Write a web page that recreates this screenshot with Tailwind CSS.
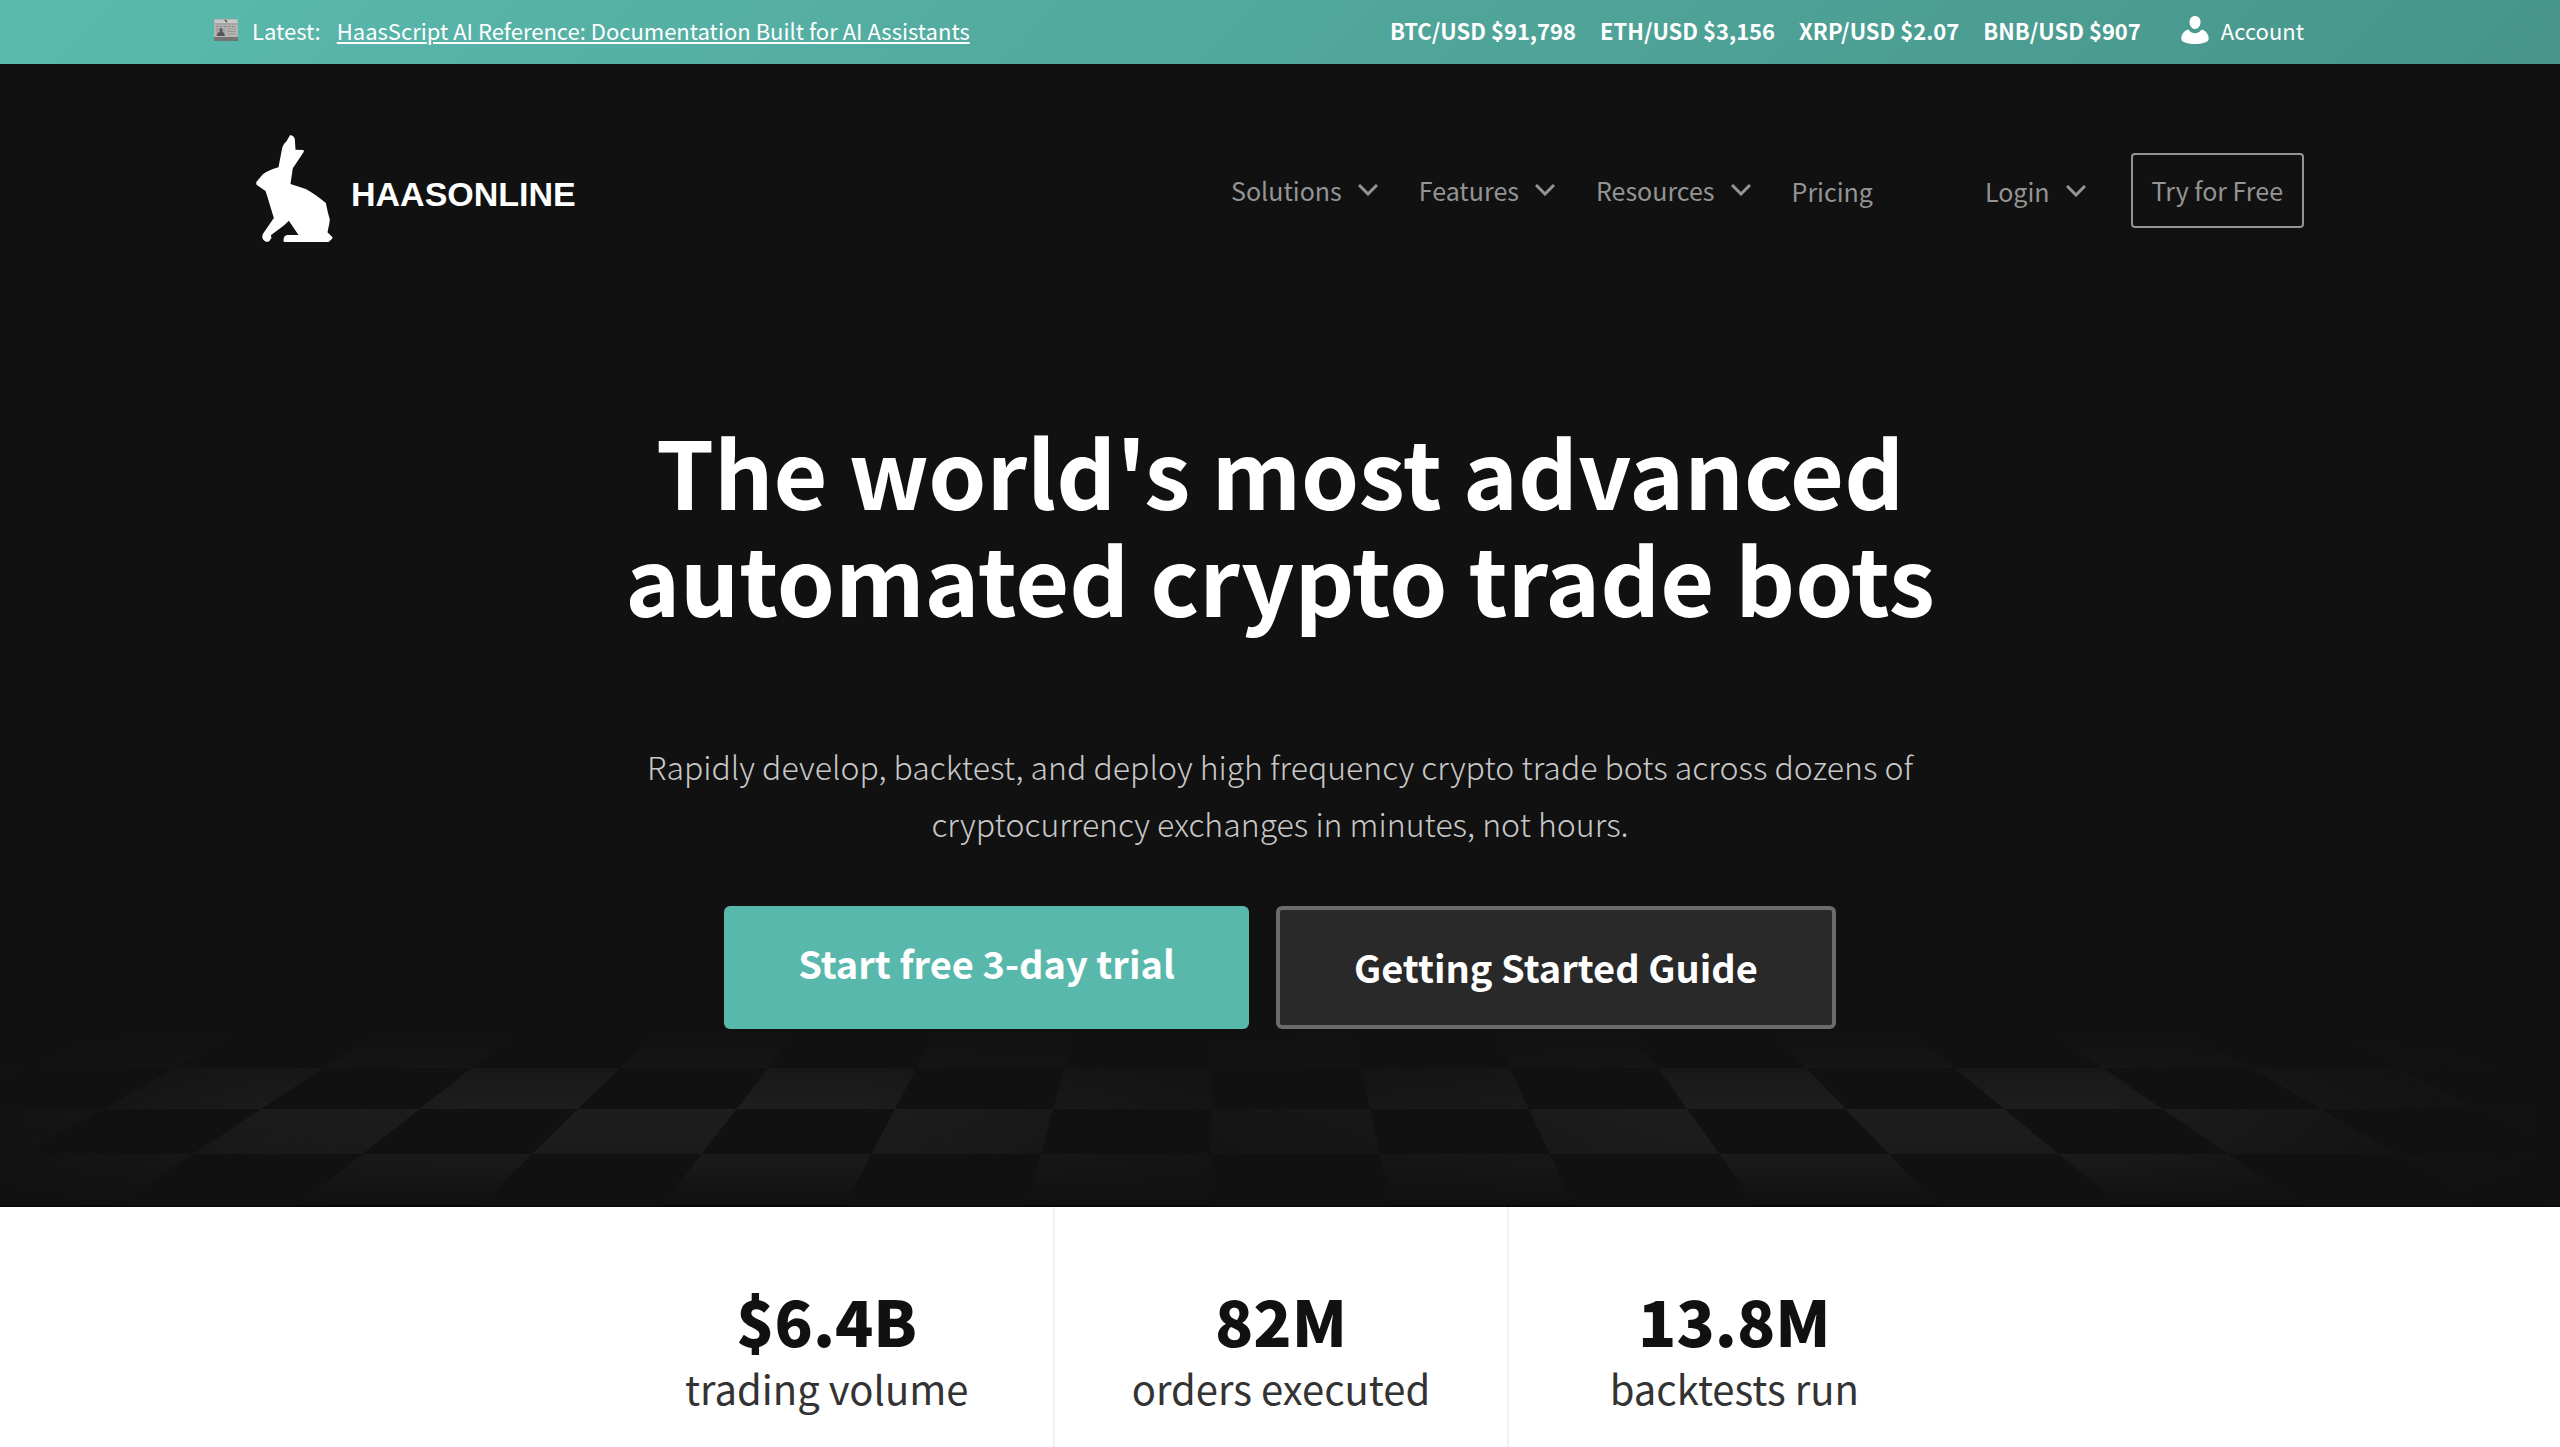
<!DOCTYPE html>
<html lang="en">
<head>
<meta charset="utf-8">
<meta name="viewport" content="width=device-width, initial-scale=1">
<title>HaasOnline</title>
<script src="https://cdn.jsdelivr.net/npm/@tailwindcss/browser@4"></script>
</head>
<body class="bg-white font-['Noto_Sans_CJK_SC','Open_Sans',sans-serif] text-[#111111]">

<div class="flex h-16 items-center justify-between bg-linear-135 from-[#5bbaae] to-[#47958a] pr-[10%] pb-1 pl-[214px] text-[22px] leading-8 whitespace-nowrap text-white">
  <div class="flex items-center">
    <svg class="mr-3.5 h-[22px] w-6" viewBox="0 0 24 22" aria-hidden="true">
      <rect x="0" y="0" width="24" height="22" rx="1" fill="#b4b4b2"/>
      <rect x="1" y="1" width="22" height="3" fill="#c9c9c7"/>
      <path d="M1 5h22M2 7.500h20" stroke="#8b8b89" stroke-dasharray="3 1"/>
      <path d="M11 1l2 2" stroke="#444" stroke-width="1.500"/>
      <rect x="2" y="9" width="9" height="8" fill="#a3a3a1"/>
      <path d="M3 17c0-3 1-4 3-4-1-2 0-4 1-4s2 2 1 4c2 0 2 2 3 4z" fill="#555"/>
      <path d="M13 10h9M13 12.500h9M13 15h9" stroke="#999997"/>
      <rect x="0" y="18" width="24" height="4" fill="#747472"/>
    </svg>
    <span class="mr-4">Latest:</span>
    <a href="#" class="underline decoration-2 underline-offset-2">HaasScript AI Reference: Documentation Built for AI Assistants</a>
  </div>
  <div class="flex items-center">
    <ul class="flex gap-6 font-bold">
      <li>BTC/USD $91,798</li>
      <li>ETH/USD $3,156</li>
      <li>XRP/USD $2.07</li>
      <li>BNB/USD $907</li>
    </ul>
    <a href="#" class="ml-10 flex items-center gap-3">
      <svg class="h-7 w-7" viewBox="0 0 28 28" fill="#fff" aria-hidden="true">
        <path d="M14 0c3.300 0 5.500 2.600 5.500 6s-2.200 7-5.500 7-5.500-3.600-5.500-7S10.700 0 14 0z"/>
        <path d="M7.500 13.500C9 16 11.300 17.300 14 17.300s5-1.300 6.500-3.800c4.500 1.200 7.200 4.700 7.200 9.500 0 3.500-7 5-13.700 5S.3 26.500.3 23c0-4.800 2.700-8.300 7.200-9.500z"/>
      </svg>
      Account
    </a>
  </div>
</div>

<div class="relative border-b-2 border-[#0a0a0a] bg-[#111111]">
  <svg id="floor" class="absolute -bottom-0.5 left-0 h-[180px] w-full" viewBox="0 1027 2560 180" preserveAspectRatio="none" aria-hidden="true">
    <defs>
      <linearGradient id="depth" x1="0" y1="0" x2="0" y2="1">
        <stop offset="0" stop-color="#fff" stop-opacity="0"/>
        <stop offset=".22" stop-color="#fff" stop-opacity=".35"/>
        <stop offset=".24" stop-color="#fff" stop-opacity=".6"/>
        <stop offset=".46" stop-color="#fff" stop-opacity="1"/>
        <stop offset=".7" stop-color="#fff" stop-opacity=".8"/>
        <stop offset=".95" stop-color="#fff" stop-opacity=".1"/>
        <stop offset="1" stop-color="#fff" stop-opacity="0"/>
      </linearGradient>
      <linearGradient id="spread" x1="0" y1="0" x2="1" y2="0">
        <stop offset="0" stop-color="#1e1e1e" stop-opacity=".1"/>
        <stop offset=".1" stop-color="#1e1e1e" stop-opacity=".8"/>
        <stop offset=".2" stop-color="#1e1e1e"/>
        <stop offset=".33" stop-color="#1e1e1e"/>
        <stop offset=".47" stop-color="#1e1e1e" stop-opacity=".35"/>
        <stop offset=".57" stop-color="#1e1e1e" stop-opacity=".6"/>
        <stop offset=".65" stop-color="#1e1e1e"/>
        <stop offset=".82" stop-color="#1e1e1e"/>
        <stop offset=".93" stop-color="#1e1e1e" stop-opacity=".3"/>
        <stop offset="1" stop-color="#1e1e1e" stop-opacity="0"/>
      </linearGradient>
      <mask id="tiles" maskUnits="userSpaceOnUse" x="0" y="1027" width="2560" height="180"><path id="tilePath" fill="#fff"/></mask>
      <mask id="fade" maskUnits="userSpaceOnUse" x="0" y="1027" width="2560" height="180"><rect x="0" y="1027" width="2560" height="180" fill="url(#depth)"/></mask>
    </defs>
    <g mask="url(#fade)"><rect x="0" y="1027" width="2560" height="180" fill="url(#spread)" mask="url(#tiles)"/></g>
  </svg>

  <header class="relative flex items-center justify-between px-[10%] pt-[71px] text-[25px] leading-8 whitespace-nowrap text-[#949494]">
    <a href="#" class="flex items-center text-white">
      <svg class="h-[107px] w-[77px]" viewBox="78 75 230 321" fill="#fff" aria-hidden="true">
        <path d="M180 75c7 1 12 6 14 12l2 32 24 1 1 5-33 50-7 47 46 15c20 12 40 25 60 42l6 28 6 22-2 14-5 24 15 15-1 4-12 11H163l-3-4c0-12 4-17 12-18l33 0-29-43-14 14-40 30 2 8-4 5c-2 5-6 7-12 6-6-2-11-7-12-15l2-8 33-48-20-66-5-15-27-19-1-7 20-24c11-9 26-15 47-21l11-58c3-9 7-16 12-19z"/>
      </svg>
      <span class="pt-2.5 pl-[18px] font-['Liberation_Sans',Arial,sans-serif] text-[34px] leading-10 font-bold">HAASONLINE</span>
    </a>
    <div class="flex items-center pt-1">
      <nav class="flex items-center gap-[41px]">
        <button type="button" class="flex items-center gap-4 pb-0.5">Solutions
          <svg class="h-3 w-5" viewBox="0 0 20 12" fill="none" stroke="currentColor" stroke-width="3" aria-hidden="true"><path d="M1 1l9 9 9-9"/></svg>
        </button>
        <button type="button" class="flex items-center gap-4 pb-0.5">Features
          <svg class="h-3 w-5" viewBox="0 0 20 12" fill="none" stroke="currentColor" stroke-width="3" aria-hidden="true"><path d="M1 1l9 9 9-9"/></svg>
        </button>
        <button type="button" class="flex items-center gap-4 pb-0.5">Resources
          <svg class="h-3 w-5" viewBox="0 0 20 12" fill="none" stroke="currentColor" stroke-width="3" aria-hidden="true"><path d="M1 1l9 9 9-9"/></svg>
        </button>
        <a href="#">Pricing</a>
      </nav>
      <button type="button" class="ml-28 flex items-center gap-4">Login
        <svg class="h-3 w-5" viewBox="0 0 20 12" fill="none" stroke="currentColor" stroke-width="3" aria-hidden="true"><path d="M1 1l9 9 9-9"/></svg>
      </button>
      <a href="#" class="ml-[45px] rounded border-2 border-[#949494] px-[19px] pt-[19px] pb-5">Try for Free</a>
    </div>
  </header>

  <main class="relative flex flex-col items-center px-8 pt-[174px] pb-[176px] text-center">
    <h1 class="text-[93px] leading-[107px] font-bold text-white">The world's most advanced<br>automated crypto trade bots</h1>
    <p class="mt-[108px] max-w-[1300px] text-[32px] leading-[57px] font-light text-[#c8c8c8]">Rapidly develop, backtest, and deploy high frequency crypto trade bots across dozens of cryptocurrency exchanges in minutes, not hours.</p>
    <div class="mt-[54px] flex gap-[27px] text-[38px] leading-[56px] font-bold text-white">
      <a href="#" class="rounded-md bg-[#59b8ac] px-[74px] pt-[29px] pb-[38px]">Start free 3-day trial</a>
      <a href="#" class="rounded-md border-4 border-[#6b6b6b] bg-[#292929] px-[74px] pt-[29px] pb-[30px]">Getting Started Guide</a>
    </div>
  </main>
</div>

<section class="mx-auto grid max-w-[1360px] grid-cols-3 text-center">
  <div class="pt-[81px] pb-12">
    <div class="text-[63px] leading-16 font-black">$6.4B</div>
    <div class="mt-2.5 text-[40px] leading-[52px] text-[#333333]">trading volume</div>
  </div>
  <div class="border-l-2 border-[#f0f0f0] pt-[81px] pb-12">
    <div class="text-[63px] leading-16 font-black">82M</div>
    <div class="mt-2.5 text-[40px] leading-[52px] text-[#333333]">orders executed</div>
  </div>
  <div class="border-l-2 border-[#f0f0f0] pt-[81px] pb-12">
    <div class="text-[63px] leading-16 font-black">13.8M</div>
    <div class="mt-2.5 text-[40px] leading-[52px] text-[#333333]">backtests run</div>
  </div>
</section>

<script>
  // Checkerboard floor in one-point perspective: row edges, then tile corners per row.
  const rows = [1032, 1068, 1109, 1154, 1207];
  const x = (k, y) => 1213 - 0.028 * (y - 1068) + k * (148.3 + 0.2477 * (y - 1068));
  let d = '';
  for (let r = 0; r < 4; r++) {
    for (let k = -12 + (r % 2); k < 12; k += 2) {
      const t = rows[r], b = rows[r + 1];
      d += `M${x(k, t)} ${t}L${x(k + 1, t)} ${t}L${x(k + 1, b)} ${b}L${x(k, b)} ${b}Z`;
    }
  }
  document.getElementById('tilePath').setAttribute('d', d);
</script>
</body>
</html>
